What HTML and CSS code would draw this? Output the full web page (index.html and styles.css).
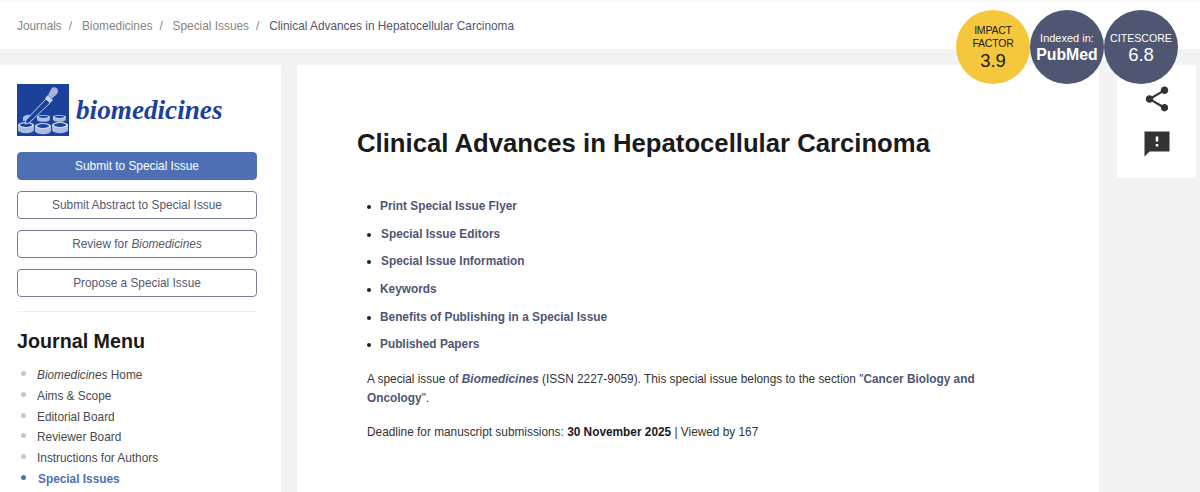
FILE: index.html
```html
<!DOCTYPE html>
<html lang="en">
<head>
    <meta charset="UTF-8">
    <title>Clinical Advances in Hepatocellular Carcinoma</title>
    <link rel="stylesheet" href="styles.css">
</head>
<body>
    <header class="breadcrumb-bar">
        <nav class="breadcrumb">
            <a href="#">Journals</a><span class="sep">/</span>
            <a href="#">Biomedicines</a><span class="sep">/</span>
            <a href="#">Special Issues</a><span class="sep">/</span>
            <span class="current">Clinical Advances in Hepatocellular Carcinoma</span>
        </nav>
    </header>

    <div class="badges">
        <div class="badge badge-yellow">
            <span class="badge-small">IMPACT<br>FACTOR</span>
            <span class="badge-value">3.9</span>
        </div>
        <div class="badge badge-dark">
            <span class="badge-label">Indexed in:</span>
            <span class="badge-name">PubMed</span>
        </div>
        <div class="badge badge-dark">
            <span class="badge-label badge-caps">CITESCORE</span>
            <span class="badge-value">6.8</span>
        </div>
    </div>

    <div class="page">
        <aside class="sidebar">
            <a class="journal-logo" href="#">
                <svg class="logo-mark" viewBox="0 0 52 52" width="52" height="52">
                    <defs>
                        <g id="dish">
                            <path d="M0 3 V8 A8 3.2 0 0 0 16 8 V3 Z" fill="#a9bbe0"/>
                            <ellipse cx="8" cy="3" rx="8" ry="3" fill="#d3dcf0"/>
                            <ellipse cx="8" cy="3" rx="6" ry="1.9" fill="#1b419b"/>
                        </g>
                    </defs>
                    <rect width="52" height="52" fill="#1b419b"/>
                    <use href="#dish" transform="translate(20 31) scale(.8 .6)"/>
                    <use href="#dish" transform="translate(36 31) scale(.8 .6)"/>
                    <use href="#dish" x="1" y="38"/>
                    <use href="#dish" x="18" y="39"/>
                    <use href="#dish" x="35" y="38"/>
                    <path d="M6 33 Q9 30 13 31 L16 36 L6 37 Z" fill="#a9bbe0"/>
                    <path d="M29 15 L33 19 L12 39 L8 40 L9 36 Z" fill="#1b419b" stroke="#c6d2ec" stroke-width="1"/>
                    <path d="M28 14 L31 11 L36 16 L33 19 Z" fill="#c6d2ec"/>
                    <path d="M31 11 L35 14.500 L40 10 Q42 7 40 4.500 Q37 2 34.500 4.500 Z" fill="#a5b5db"/>
                </svg>
                <span class="logo-text">biomedicines</span>
            </a>

            <a class="btn btn-primary" href="#">Submit to Special Issue</a>
            <a class="btn" href="#">Submit Abstract to Special Issue</a>
            <a class="btn" href="#">Review for <em>Biomedicines</em></a>
            <a class="btn" href="#">Propose a Special Issue</a>

            <hr class="side-rule">

            <h2 class="menu-title">Journal Menu</h2>
            <ul class="menu">
                <li><a href="#"><em>Biomedicines</em> Home</a></li>
                <li><a href="#">Aims &amp; Scope</a></li>
                <li><a href="#">Editorial Board</a></li>
                <li><a href="#">Reviewer Board</a></li>
                <li><a href="#">Instructions for Authors</a></li>
                <li class="active"><a href="#">Special Issues</a></li>
            </ul>
        </aside>

        <main class="content">
            <h1 class="title">Clinical Advances in Hepatocellular Carcinoma</h1>
            <ul class="toc">
                <li><a href="#">Print Special Issue Flyer</a></li>
                <li><a class="nudge" href="#">Special Issue Editors</a></li>
                <li><a class="nudge" href="#">Special Issue Information</a></li>
                <li><a href="#">Keywords</a></li>
                <li><a href="#">Benefits of Publishing in a Special Issue</a></li>
                <li><a href="#">Published Papers</a></li>
            </ul>
            <p class="intro">A special issue of <a href="#"><em>Biomedicines</em></a> (ISSN 2227-9059). This special issue belongs to the section "<a href="#">Cancer Biology and Oncology</a>".</p>
            <p class="deadline">Deadline for manuscript submissions: <strong>30 November 2025</strong> | Viewed by 167</p>
        </main>

        <aside class="tools">
            <svg viewBox="0 0 24 24" width="30" height="30">
                <path fill="#333" d="M18 16.08c-.76 0-1.44.3-1.96.77L8.91 12.7c.05-.23.09-.46.09-.7s-.04-.47-.09-.7l7.05-4.11c.54.5 1.25.81 2.04.81 1.66 0 3-1.34 3-3s-1.34-3-3-3-3 1.34-3 3c0 .24.04.47.09.7L8.04 9.81C7.5 9.31 6.79 9 6 9c-1.66 0-3 1.34-3 3s1.34 3 3 3c.79 0 1.5-.31 2.04-.81l7.12 4.16c-.05.21-.08.43-.08.65 0 1.61 1.31 2.92 2.92 2.92s2.92-1.31 2.92-2.92-1.31-2.92-2.92-2.92z"/>
            </svg>
            <svg viewBox="0 0 24 24" width="30" height="30">
                <path fill="#333" d="M22 2H2v20l4-4h16V2zm-9 12h-2v-2h2v2zm0-4h-2V6h2v4z"/>
            </svg>
        </aside>
    </div>
</body>
</html>
```

FILE: styles.css
```css
* {
    margin: 0;
    padding: 0;
    box-sizing: border-box;
}

html, body {
    height: 492px;
    overflow: hidden;
}

body {
    font-family: "Liberation Sans", Arial, sans-serif;
    background: #f3f3f3;
    color: #222;
    position: relative;
}

a {
    text-decoration: none;
    color: inherit;
}

.breadcrumb-bar {
    height: 49px;
    background: #fff;
    border-top: 2px solid #fafafa;
    padding: 0 17px;
    display: flex;
    align-items: center;
}

.breadcrumb {
    font-size: 11.85px;
    color: #858585;
}

.breadcrumb .sep {
    margin: 0 6.6px 0 7px;
}

.breadcrumb .current {
    color: #4f5671;
}

.badges {
    position: absolute;
    top: 10px;
    left: 956px;
    display: flex;
}

.badge {
    width: 74px;
    height: 74px;
    border-radius: 50%;
    display: flex;
    flex-direction: column;
    align-items: center;
    justify-content: center;
    text-align: center;
}

.badge-yellow {
    background: #f5c73d;
    color: #1a1a1a;
}

.badge-dark {
    background: #4f5671;
    color: #fff;
    padding-top: 2px;
}

.badge-small {
    font-size: 10.5px;
    line-height: 13px;
    letter-spacing: -0.2px;
}

.badge-yellow .badge-value {
    margin-top: 1px;
}

.badge-label {
    font-size: 11px;
    line-height: 14px;
}

.badge-caps {
    font-size: 10.6px;
}

.badge-value {
    font-size: 18.5px;
    line-height: 20px;
}

.badge-name {
    font-size: 15.8px;
    font-weight: 700;
    line-height: 20px;
}

.page {
    display: flex;
    align-items: flex-start;
    margin-top: 16px;
    gap: 16px;
    padding-right: 4px;
}

.sidebar {
    width: 281px;
    height: 427px;
    background: #fff;
    padding: 19px 24px 0 17px;
    flex-shrink: 0;
}

.journal-logo {
    display: flex;
    align-items: center;
    height: 52px;
    margin-bottom: 16px;
}

.logo-text {
    font-family: "Liberation Serif", serif;
    font-style: italic;
    font-weight: 700;
    font-size: 27.2px;
    color: #1b419b;
    margin-left: 7px;
}

.btn {
    display: block;
    height: 28px;
    line-height: 26px;
    margin-bottom: 11px;
    text-align: center;
    font-size: 11.85px;
    color: #555a6e;
    background: #fff;
    border: 1px solid #7a7f93;
    border-radius: 4px;
}

.btn-primary {
    background: #4f6fb5;
    border-color: #4f6fb5;
    color: #fff;
}

.side-rule {
    border: 0;
    border-top: 1px solid #eeeeee;
    margin-top: 14px;
}

.menu-title {
    font-size: 19.7px;
    font-weight: 700;
    line-height: 24px;
    color: #1a1a1a;
    margin-top: 17px;
    margin-bottom: 12px;
}

.menu {
    list-style: none;
    font-size: 11.85px;
    color: #4a4a4a;
}

.menu li {
    height: 20.8px;
    line-height: 20.8px;
    padding-left: 20px;
    position: relative;
}

.menu li::before {
    content: '';
    position: absolute;
    left: 4px;
    top: 6px;
    width: 5px;
    height: 5px;
    border-radius: 50%;
    background: #c8c8c8;
}

.menu .active {
    color: #4f6fb5;
    font-weight: 700;
}

.menu .active a {
    margin-left: 1px;
}

.menu .active::before {
    background: #4f6fb5;
}

.content {
    width: 802px;
    height: 427px;
    background: #fff;
    padding: 0 60px;
    flex-shrink: 0;
}

.title {
    font-size: 25.7px;
    font-weight: 700;
    line-height: 32px;
    color: #1a1a1a;
    margin-top: 62px;
    margin-bottom: 34px;
}

.toc {
    font-size: 11.85px;
    font-weight: 700;
    color: #4f5671;
    padding-left: 23px;
    list-style: none;
}

.toc li {
    height: 27.7px;
    line-height: 27.7px;
    position: relative;
}

.toc li::before {
    content: '';
    position: absolute;
    left: -13px;
    top: 12px;
    width: 4px;
    height: 4px;
    border-radius: 50%;
    background: #222;
}

.toc .nudge {
    margin-left: 1px;
}

.intro, .deadline {
    font-size: 11.85px;
    line-height: 19px;
    color: #333;
    margin-left: 10px;
    width: 640px;
}

.intro {
    margin-top: 10.5px;
}

.intro a {
    font-weight: 700;
    color: #4f5671;
}

.deadline {
    margin-top: 15.5px;
}

.deadline strong {
    color: #1a1a1a;
}

.tools {
    width: 79px;
    height: 113px;
    margin-left: 2px;
    background: #fff;
    display: flex;
    flex-direction: column;
    align-items: center;
    gap: 14.5px;
    padding-top: 19px;
    flex-shrink: 0;
}
```
